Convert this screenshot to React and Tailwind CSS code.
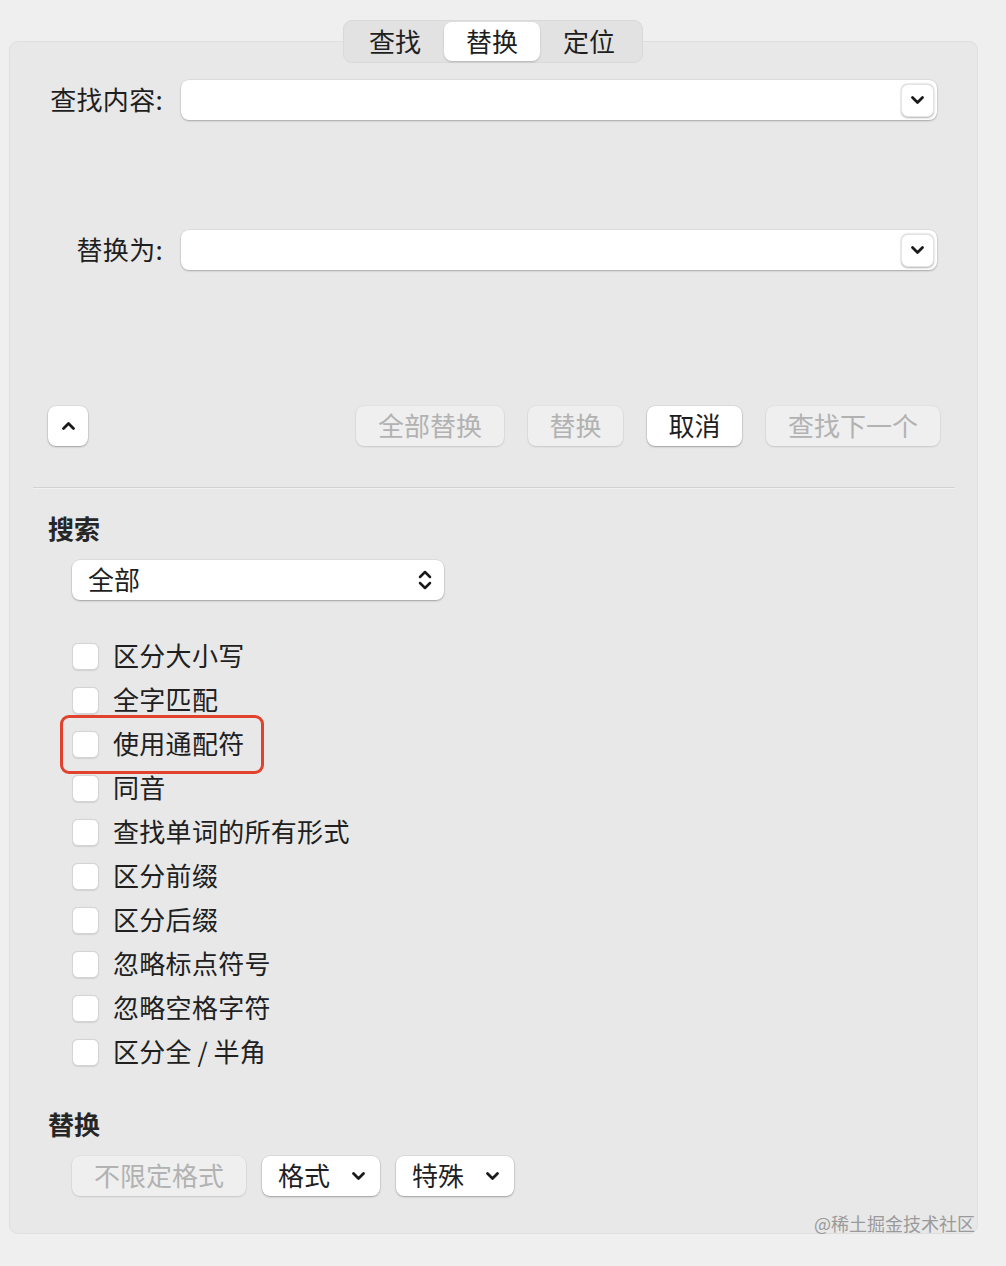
import React from "react";

const font = { fontFamily: '"Noto Sans CJK SC", "Noto Sans", sans-serif' };

function ChevronDown() {
  return (
    <svg width="15" height="10" viewBox="0 0 15 10">
      <polyline points="2.5,2.5 7.5,7.5 12.5,2.5" fill="none" stroke="#1a1a1a" strokeWidth="2.8" strokeLinecap="round" strokeLinejoin="round" />
    </svg>
  );
}
function ChevronUp() {
  return (
    <svg width="15" height="10" viewBox="0 0 15 10">
      <polyline points="2.5,7.5 7.5,2.5 12.5,7.5" fill="none" stroke="#1a1a1a" strokeWidth="2.8" strokeLinecap="round" strokeLinejoin="round" />
    </svg>
  );
}
function UpDown() {
  return (
    <svg width="14" height="24" viewBox="0 0 14 24">
      <polyline points="2,9 7,4 12,9" fill="none" stroke="#1a1a1a" strokeWidth="2.5" strokeLinecap="round" strokeLinejoin="round" />
      <polyline points="2,15 7,20 12,15" fill="none" stroke="#1a1a1a" strokeWidth="2.5" strokeLinecap="round" strokeLinejoin="round" />
    </svg>
  );
}

function ComboInput() {
  return (
    <div className="ml-[18px] w-[756px] h-[40px] bg-white rounded-[8px] shadow-[0_1px_2px_rgba(0,0,0,0.25),0_0_0_0.5px_rgba(0,0,0,0.08)] flex items-center justify-end pr-[3px]">
      <div className="w-[33px] h-[33px] rounded-[7px] bg-white shadow-[0_0.5px_2px_rgba(0,0,0,0.3)] border border-[#e4e4e4] flex items-center justify-center">
        <ChevronDown />
      </div>
    </div>
  );
}

function Btn({ w, disabled, children }) {
  return (
    <div
      className={
        "h-[40px] rounded-[8px] flex items-center justify-center text-[26px] " +
        (disabled
          ? "bg-[#efefef] text-[#b2b2b2] shadow-[0_1px_2px_rgba(0,0,0,0.12),0_0_0_0.5px_rgba(0,0,0,0.05)]"
          : "bg-white text-[#1e1e1e] shadow-[0_1px_2px_rgba(0,0,0,0.28),0_0_0_0.5px_rgba(0,0,0,0.1)]")
      }
      style={{ width: w }}
    >
      <span className="-mt-[3px]">{children}</span>
    </div>
  );
}

const options = [
  "区分大小写",
  "全字匹配",
  "使用通配符",
  "同音",
  "查找单词的所有形式",
  "区分前缀",
  "区分后缀",
  "忽略标点符号",
  "忽略空格字符",
  "区分全\u2009/\u2009半角",
];

export default function App() {
  return (
    <div className="relative w-[1006px] h-[1266px] bg-[#efefef] pt-[20px] text-[#1f1f1f]" style={font}>
      {/* Segmented control */}
      <div className="relative z-10 ml-[343px] w-[300px] h-[43px] rounded-[9px] bg-[#e2e2e2] border border-[#d9d9d9] flex items-center px-[2px] text-[26px]">
        <div className="w-[98px] h-[39px] flex items-center justify-center"><span className="-mt-[3px]">查找</span></div>
        <div className="w-[96px] h-[39px] flex items-center justify-center bg-white rounded-[8px] shadow-[0_1px_2px_rgba(0,0,0,0.2)]"><span className="-mt-[3px]">替换</span></div>
        <div className="w-[98px] h-[39px] flex items-center justify-center"><span className="-mt-[3px]">定位</span></div>
      </div>

      {/* Panel */}
      <div className="ml-[9px] mt-[-22px] w-[969px] h-[1193px] rounded-[9px] bg-[#e8e8e8] border border-[#dedede] flex flex-col">
        <div className="mt-[38px] flex items-center">
          <div className="w-[153px] text-right text-[26px] tracking-[0.3px] -mt-[3px]">查找内容:</div>
          <ComboInput />
        </div>
        <div className="mt-[110px] flex items-center">
          <div className="w-[153px] text-right text-[26px] tracking-[0.3px] -mt-[3px]">替换为:</div>
          <ComboInput />
        </div>

        <div className="mt-[136px] flex items-center pl-[38px]">
          <div className="w-[40px] h-[40px] bg-white rounded-[8px] shadow-[0_1px_2px_rgba(0,0,0,0.28),0_0_0_0.5px_rgba(0,0,0,0.1)] flex items-center justify-center">
            <ChevronUp />
          </div>
          <div className="ml-[268px] flex items-center gap-[24px]">
            <Btn w={148} disabled>全部替换</Btn>
            <Btn w={95} disabled>替换</Btn>
            <Btn w={95}>取消</Btn>
            <Btn w={174} disabled>查找下一个</Btn>
          </div>
        </div>

        <div className="mt-[41px] ml-[23px] w-[922px] h-[2px] bg-[#d2d2d2] border-b border-[#f2f2f2]" />

        <div className="mt-[20px] ml-[38px] h-[36px] flex items-center text-[26px] font-bold text-[#262626]">搜索</div>

        <div className="mt-[15px] ml-[62px] w-[372px] h-[40px] bg-white rounded-[8px] shadow-[0_1px_2px_rgba(0,0,0,0.28),0_0_0_0.5px_rgba(0,0,0,0.08)] flex items-center justify-between pl-[16px] pr-[12px] text-[26px]">
          <span className="-mt-[3px]">全部</span>
          <UpDown />
        </div>

        <div className="mt-[34px] flex flex-col">
          {options.map((o, i) => (
            <div key={o} className="relative h-[44px] flex items-center pl-[62px]">
              <div className="w-[27px] h-[27px] bg-white rounded-[6px] border border-[#d4d4d4] shadow-[0_0.5px_1px_rgba(0,0,0,0.1)]" />
              <span className="ml-[14px] -mt-[3px] text-[26px] tracking-[0.3px] text-[#202020] whitespace-pre">{o}</span>
              {i === 2 && (
                <div className="absolute left-[50px] top-[-7px] w-[204px] h-[59px] border-[3px] border-[#e2412c] rounded-[9px]" />
              )}
            </div>
          ))}
        </div>

        <div className="mt-[31px] ml-[38px] h-[36px] flex items-center text-[26px] font-bold text-[#262626]">替换</div>

        <div className="mt-[15px] ml-[62px] flex items-center gap-[16px]">
          <Btn w={174} disabled>不限定格式</Btn>
          <div className="w-[118px] h-[40px] bg-white rounded-[8px] shadow-[0_1px_2px_rgba(0,0,0,0.28),0_0_0_0.5px_rgba(0,0,0,0.1)] flex items-center justify-between pl-[16px] pr-[14px] text-[26px]">
            <span className="-mt-[3px]">格式</span>
            <ChevronDown />
          </div>
          <div className="w-[118px] h-[40px] bg-white rounded-[8px] shadow-[0_1px_2px_rgba(0,0,0,0.28),0_0_0_0.5px_rgba(0,0,0,0.1)] flex items-center justify-between pl-[16px] pr-[14px] text-[26px]">
            <span className="-mt-[3px]">特殊</span>
            <ChevronDown />
          </div>
        </div>
      </div>

      {/* Watermark */}
      <div className="absolute left-[814px] top-[1210px] text-[18px] text-[#9a9a9a]">@稀土掘金技术社区</div>
    </div>
  );
}
